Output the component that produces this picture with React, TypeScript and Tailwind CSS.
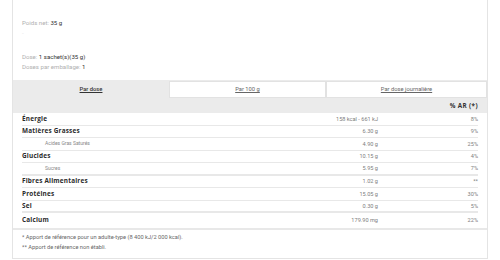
const rows = [
  { label: "Énergie", value: "158 kcal - 661 kJ", ar: "8%", line: "border-b" },
  { label: "Matières Grasses", value: "6.30 g", ar: "9%", line: "border-b" },
  { label: "Acides Gras Saturés", value: "4.90 g", ar: "25%", sub: true, line: "border-b" },
  { label: "Glucides", value: "10.15 g", ar: "4%", line: "border-b" },
  { label: "Sucres", value: "5.95 g", ar: "7%", sub: true, line: "border-b-2" },
  { label: "Fibres Alimentaires", value: "1.02 g", ar: "**", line: "border-b" },
  { label: "Protéines", value: "15.05 g", ar: "30%", line: "border-b" },
  { label: "Sel", value: "0.30 g", ar: "5%", line: "border-b-2" },
];

const tabs = ["Par dose", "Par 100 g", "Par dose journalière"];

export default function App() {
  return (
    <div className="h-[260px] w-[500px] overflow-hidden bg-white font-['Roboto',sans-serif]">
      <div className="ml-3 w-[476px] border-x border-b border-[#e4e4e4] pt-[18px]">
        <div className="px-[9px] text-[6.1px] text-[#b0b0b0]">
          <p className="h-[10px] leading-[10px]">
            Poids net: <span className="text-[#333]">35 g</span>
          </p>
          <p className="h-[10px] leading-[10px] text-[#e6e6e6]">-</p>
          <p className="mt-[14px] h-[10px] leading-[10px]">
            Dose: <span className="text-[#333]">1 sachet(s)(35 g)</span>
          </p>
          <p className="h-[10px] leading-[10px]">
            Doses par emballage: <span className="text-[#333]">1</span>
          </p>
        </div>

        <div className="mt-[8px] bg-[#ebebeb]">
          <div className="grid h-[18px] grid-cols-[156px_157px_1fr] pt-px">
            {tabs.map((t, i) => (
              <div
                key={t}
                className={
                  i === 0
                    ? "flex items-center justify-center"
                    : "flex items-center justify-center border border-[#e2e2e2] bg-white"
                }
              >
                <span
                  className={
                    i === 0
                      ? "text-[5.8px] font-medium text-[#333] underline"
                      : "text-[5.8px] text-[#666] underline"
                  }
                >
                  {t}
                </span>
              </div>
            ))}
          </div>
          <div className="flex h-[15px] items-center justify-end px-[9px]">
            <span className="font-['Open_Sans',sans-serif] text-[6.3px] font-bold tracking-[0.4px] text-[#333]">
              % AR (*)
            </span>
          </div>
        </div>

        <div className="px-[9px]">
          {rows.map((r) => (
            <div
              key={r.label}
              className={`grid h-[12.5px] grid-cols-[1fr_140px_100px] items-center border-[#e8e8e8] ${r.line}`}
            >
              <span
                className={
                  r.sub
                    ? "pl-[23px] text-[5px] text-[#888]"
                    : "font-['Open_Sans',sans-serif] text-[6.4px] font-bold tracking-[0.2px] text-[#2b2b2b]"
                }
              >
                {r.label}
              </span>
              <span className="text-right text-[5.6px] text-[#808080]">{r.value}</span>
              <span className="text-right text-[5.6px] text-[#808080]">{r.ar}</span>
            </div>
          ))}
          <div className="grid h-[14.5px] grid-cols-[1fr_140px_100px] items-center">
            <span className="font-['Open_Sans',sans-serif] text-[6.4px] font-bold tracking-[0.2px] text-[#2b2b2b]">
              Calcium
            </span>
            <span className="text-right text-[5.6px] text-[#808080]">179.90 mg</span>
            <span className="text-right text-[5.6px] text-[#808080]">22%</span>
          </div>
        </div>

        <div className="border-t-2 border-[#e8e8e8] px-[9px] pt-[2.5px] pb-[6px] text-[5.7px] text-[#666]">
          <p className="h-[10px] leading-[10px]">* Apport de référence pour un adulte-type (8 400 kJ/2 000 kcal).</p>
          <p className="h-[10px] leading-[10px]">** Apport de référence non établi.</p>
        </div>
      </div>
    </div>
  );
}
